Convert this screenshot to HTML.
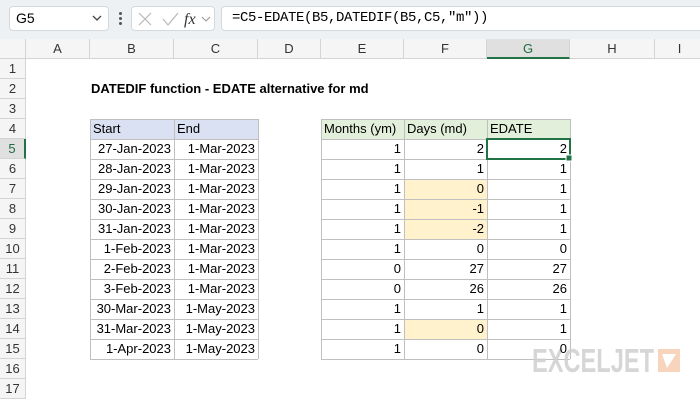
<!DOCTYPE html>
<html><head><style>
*{margin:0;padding:0;box-sizing:border-box}
body{width:700px;height:400px;overflow:hidden;background:#fff;font-family:"Liberation Sans",Arial,sans-serif;position:relative}
.a{position:absolute}
.c{position:absolute;height:20px;line-height:20px;font-size:13px;color:#000;white-space:nowrap;padding:0 3px}
.r{text-align:right}
.hdr{position:absolute;top:39px;height:20px;line-height:20px;font-size:13px;color:#333;text-align:center;background:#f5f5f5;border-right:1px solid #d4d4d4;border-bottom:1px solid #d4d4d4}
.rn{position:absolute;left:0;width:26px;height:20px;line-height:20px;font-size:13px;color:#333;text-align:center;background:#f5f5f5;border-bottom:1px solid #d4d4d4;border-right:1px solid #d4d4d4}
</style></head><body>
<div class="a" style="left:0;top:0;width:700px;height:39px;background:#eef1f4"></div>
<div class="a" style="left:9px;top:6px;width:100px;height:25px;background:#fff;border:1px solid #d6d9dc;border-radius:4px;font-size:14px;line-height:23px;padding-left:6px">G5</div>
<svg class="a" style="left:92px;top:14px" width="10" height="8"><path d="M1 2 L5 6 L9 2" fill="none" stroke="#444" stroke-width="1.3"/></svg>
<div class="a" style="left:119px;top:12px;width:3px;height:3px;background:#555;border-radius:2px"></div>
<div class="a" style="left:119px;top:17px;width:3px;height:3px;background:#555;border-radius:2px"></div>
<div class="a" style="left:119px;top:22px;width:3px;height:3px;background:#555;border-radius:2px"></div>
<div class="a" style="left:131px;top:6px;width:84px;height:25px;background:#fff;border:1px solid #d6d9dc;border-radius:4px"></div>
<svg class="a" style="left:136px;top:10px" width="80" height="18"><path d="M3 3 L15 15 M15 3 L3 15" stroke="#b8b8b8" stroke-width="1.2"/><path d="M27 9 L32 15 L42 3" fill="none" stroke="#b8b8b8" stroke-width="1.2"/><text x="48" y="14" font-family="Liberation Serif" font-style="italic" font-size="16" fill="#333">fx</text><path d="M66 7 L70 11 L74 7" fill="none" stroke="#999" stroke-width="1.1"/></svg>
<div class="a" style="left:221px;top:6px;width:485px;height:25px;background:#fff;border:1px solid #d6d9dc;border-radius:4px;font-family:'Liberation Mono',monospace;font-size:14px;letter-spacing:-0.4px;line-height:23px;padding-left:10px">=C5-EDATE(B5,DATEDIF(B5,C5,"m"))</div>

<div class="hdr" style="left:0;width:26px"></div>
<div class="hdr" style="left:26px;width:64px">A</div>
<div class="hdr" style="left:90px;width:84px">B</div>
<div class="hdr" style="left:174px;width:84px">C</div>
<div class="hdr" style="left:258px;width:63px">D</div>
<div class="hdr" style="left:321px;width:83px">E</div>
<div class="hdr" style="left:404px;width:83px">F</div>
<div class="hdr" style="left:487px;width:83px;background:#e0e0e0;color:#1d6b40;border-bottom:2px solid #217346">G</div>
<div class="hdr" style="left:570px;width:85px">H</div>
<div class="hdr" style="left:655px;width:50px">I</div>

<div class="rn" style="top:59px">1</div><div class="rn" style="top:79px">2</div><div class="rn" style="top:99px">3</div><div class="rn" style="top:119px">4</div>
<div class="rn" style="top:139px;background:#e0e0e0;color:#1d6b40;border-right:2px solid #217346">5</div>
<div class="rn" style="top:159px">6</div><div class="rn" style="top:179px">7</div><div class="rn" style="top:199px">8</div><div class="rn" style="top:219px">9</div><div class="rn" style="top:239px">10</div><div class="rn" style="top:259px">11</div><div class="rn" style="top:279px">12</div><div class="rn" style="top:299px">13</div><div class="rn" style="top:319px">14</div><div class="rn" style="top:339px">15</div><div class="rn" style="top:359px">16</div><div class="rn" style="top:379px">17</div>

<div class="c" style="left:88px;top:79px;font-weight:bold">DATEDIF function - EDATE alternative for md</div>

<svg class="a" style="left:0;top:0" width="700" height="400">
<rect x="90" y="119" width="168" height="20" fill="#d9e1f2"/>
<rect x="321" y="119" width="249" height="20" fill="#e2efda"/>
<rect x="404" y="179" width="83" height="60" fill="#fff2cc"/>
<rect x="404" y="319" width="83" height="20" fill="#fff2cc"/>
<g stroke="#bfbfbf" stroke-width="1" shape-rendering="crispEdges">
<path d="M90 119.5H258 M90 139.5H258 M90 159.5H258 M90 179.5H258 M90 199.5H258 M90 219.5H258 M90 239.5H258 M90 259.5H258 M90 279.5H258 M90 299.5H258 M90 319.5H258 M90 339.5H258 M90 359.5H258"/>
<path d="M90.5 119V359 M174.5 119V359 M258.5 119V359"/>
<path d="M321 119.5H570 M321 139.5H570 M321 159.5H570 M321 179.5H570 M321 199.5H570 M321 219.5H570 M321 239.5H570 M321 259.5H570 M321 279.5H570 M321 299.5H570 M321 319.5H570 M321 339.5H570 M321 359.5H570"/>
<path d="M321.5 119V359 M404.5 119V359 M487.5 119V359 M570.5 119V359"/>
</g>
<rect x="487" y="139" width="83" height="20" fill="none" stroke="#217346" stroke-width="2"/>
<rect x="566" y="155" width="6" height="6" fill="#217346" stroke="#fff" stroke-width="1"/>
<text x="532" y="372" font-family="Liberation Sans" font-weight="bold" font-size="33" fill="#d0d0d0" opacity="0.85" textLength="122" lengthAdjust="spacingAndGlyphs">EXCELJET</text>
<rect x="658" y="349" width="22" height="23" fill="#f7cfb6" opacity="0.9"/>
<path d="M662 354 L676 354 L667 368 Z" fill="#fff"/>
</svg>

<div class="c" style="left:90px;top:119px">Start</div>
<div class="c" style="left:174px;top:119px">End</div>
<div class="c" style="left:321px;top:119px">Months (ym)</div>
<div class="c" style="left:404px;top:119px">Days (md)</div>
<div class="c" style="left:487px;top:119px">EDATE</div>

<div class="a" style="left:0;top:139px">
<div class="c r" style="left:90px;top:0;width:84px">27-Jan-2023</div><div class="c r" style="left:174px;top:0;width:84px">1-Mar-2023</div>
<div class="c r" style="left:90px;top:20px;width:84px">28-Jan-2023</div><div class="c r" style="left:174px;top:20px;width:84px">1-Mar-2023</div>
<div class="c r" style="left:90px;top:40px;width:84px">29-Jan-2023</div><div class="c r" style="left:174px;top:40px;width:84px">1-Mar-2023</div>
<div class="c r" style="left:90px;top:60px;width:84px">30-Jan-2023</div><div class="c r" style="left:174px;top:60px;width:84px">1-Mar-2023</div>
<div class="c r" style="left:90px;top:80px;width:84px">31-Jan-2023</div><div class="c r" style="left:174px;top:80px;width:84px">1-Mar-2023</div>
<div class="c r" style="left:90px;top:100px;width:84px">1-Feb-2023</div><div class="c r" style="left:174px;top:100px;width:84px">1-Mar-2023</div>
<div class="c r" style="left:90px;top:120px;width:84px">2-Feb-2023</div><div class="c r" style="left:174px;top:120px;width:84px">1-Mar-2023</div>
<div class="c r" style="left:90px;top:140px;width:84px">3-Feb-2023</div><div class="c r" style="left:174px;top:140px;width:84px">1-Mar-2023</div>
<div class="c r" style="left:90px;top:160px;width:84px">30-Mar-2023</div><div class="c r" style="left:174px;top:160px;width:84px">1-May-2023</div>
<div class="c r" style="left:90px;top:180px;width:84px">31-Mar-2023</div><div class="c r" style="left:174px;top:180px;width:84px">1-May-2023</div>
<div class="c r" style="left:90px;top:200px;width:84px">1-Apr-2023</div><div class="c r" style="left:174px;top:200px;width:84px">1-May-2023</div>

<div class="c r" style="left:321px;top:0;width:83px">1</div><div class="c r" style="left:404px;top:0;width:83px">2</div><div class="c r" style="left:487px;top:0;width:83px">2</div>
<div class="c r" style="left:321px;top:20px;width:83px">1</div><div class="c r" style="left:404px;top:20px;width:83px">1</div><div class="c r" style="left:487px;top:20px;width:83px">1</div>
<div class="c r" style="left:321px;top:40px;width:83px">1</div><div class="c r" style="left:404px;top:40px;width:83px">0</div><div class="c r" style="left:487px;top:40px;width:83px">1</div>
<div class="c r" style="left:321px;top:60px;width:83px">1</div><div class="c r" style="left:404px;top:60px;width:83px">-1</div><div class="c r" style="left:487px;top:60px;width:83px">1</div>
<div class="c r" style="left:321px;top:80px;width:83px">1</div><div class="c r" style="left:404px;top:80px;width:83px">-2</div><div class="c r" style="left:487px;top:80px;width:83px">1</div>
<div class="c r" style="left:321px;top:100px;width:83px">1</div><div class="c r" style="left:404px;top:100px;width:83px">0</div><div class="c r" style="left:487px;top:100px;width:83px">0</div>
<div class="c r" style="left:321px;top:120px;width:83px">0</div><div class="c r" style="left:404px;top:120px;width:83px">27</div><div class="c r" style="left:487px;top:120px;width:83px">27</div>
<div class="c r" style="left:321px;top:140px;width:83px">0</div><div class="c r" style="left:404px;top:140px;width:83px">26</div><div class="c r" style="left:487px;top:140px;width:83px">26</div>
<div class="c r" style="left:321px;top:160px;width:83px">1</div><div class="c r" style="left:404px;top:160px;width:83px">1</div><div class="c r" style="left:487px;top:160px;width:83px">1</div>
<div class="c r" style="left:321px;top:180px;width:83px">1</div><div class="c r" style="left:404px;top:180px;width:83px">0</div><div class="c r" style="left:487px;top:180px;width:83px">1</div>
<div class="c r" style="left:321px;top:200px;width:83px">1</div><div class="c r" style="left:404px;top:200px;width:83px">0</div><div class="c r" style="left:487px;top:200px;width:83px">0</div>
</div>
</body></html>
